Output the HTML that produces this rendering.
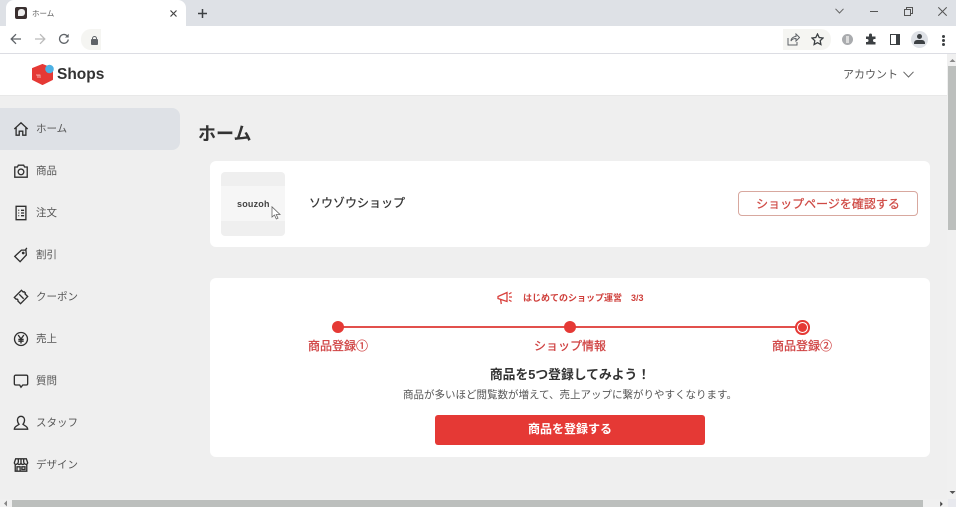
<!DOCTYPE html>
<html lang="ja">
<head>
<meta charset="utf-8">
<title>ホーム</title>
<style>
html,body{margin:0;padding:0;width:956px;height:507px;overflow:hidden;background:#efefef;font-family:"Liberation Sans","Noto Sans CJK JP",sans-serif;color:#333}
div,span,svg{position:absolute;box-sizing:border-box}
.t{white-space:nowrap;line-height:1}
.m{-webkit-text-stroke:.25px currentColor}
.nav{left:36px;font-size:10.500px;color:#555;letter-spacing:0}
.ic{left:12.500px;width:16px;height:16px;fill:none;stroke:#2f2f2f;stroke-width:1.500}
.step{font-size:12px;color:#cf4040;text-align:center;width:120px}
.dot{width:12px;height:12px;border-radius:50%;background:#e53935;top:321px}
</style>
</head>
<body>
<!-- browser tab strip -->
<div style="left:0;top:0;width:956px;height:26px;background:#dee1e6"></div>
<div style="left:6px;top:0;width:180px;height:26px;background:#fff;border-radius:8px 8px 0 0"></div>
<div style="left:15px;top:7px;width:12px;height:12px;background:#3a3030;border-radius:2px"></div>
<div style="left:18px;top:9px;width:7px;height:7px;background:#eee;border-radius:3px 3px 3px 0"></div>
<div class="t" style="left:32px;top:10px;font-size:7.500px;color:#555">ホーム</div>
<svg style="left:170px;top:10px;width:7px;height:7px" viewBox="0 0 7 7"><path d="M.5 .5l6 6M6.500 .5l-6 6" stroke="#444" stroke-width="1.200" fill="none"/></svg>
<svg style="left:198px;top:9px;width:9px;height:9px" viewBox="0 0 9 9"><path d="M4.500 0v9M0 4.500h9" stroke="#3c4043" stroke-width="1.500" fill="none"/></svg>
<svg style="left:835px;top:8px;width:9px;height:6px" viewBox="0 0 9 6"><path d="M.5 .8L4.500 5 8.500 .8" stroke="#666" fill="none"/></svg>
<div style="left:870px;top:11px;width:8px;height:1px;background:#555"></div>
<svg style="left:904px;top:7px;width:9px;height:9px" viewBox="0 0 9 9"><path d="M.5 2.500h6v6h-6zM2.500 2.500v-2h6v6h-2" stroke="#555" fill="none"/></svg>
<svg style="left:938px;top:7px;width:9px;height:9px" viewBox="0 0 9 9"><path d="M.3 .3l8.400 8.400M8.700 .3L.3 8.700" stroke="#555" fill="none"/></svg>

<!-- toolbar -->
<div style="left:0;top:26px;width:956px;height:28px;background:#fff;border-bottom:1px solid #dcdde3"></div>
<svg style="left:10px;top:33px;width:12px;height:12px" viewBox="0 0 12 12"><path d="M11 6H1.500M6 1.200L1.200 6 6 10.800" stroke="#5f6368" stroke-width="1.300" fill="none"/></svg>
<svg style="left:34px;top:33px;width:12px;height:12px" viewBox="0 0 12 12"><path d="M1 6h9.500M6 1.200L10.800 6 6 10.800" stroke="#bbb" stroke-width="1.300" fill="none"/></svg>
<svg style="left:58px;top:33px;width:12px;height:12px" viewBox="0 0 12 12"><path d="M10.300 6.500A4.400 4.400 0 1 1 9 2.700" stroke="#5f6368" stroke-width="1.300" fill="none"/><path d="M10.700 .8v3.700H7z" fill="#5f6368"/></svg>
<div style="left:81px;top:29px;width:20px;height:21px;background:#f5f5f2;border-radius:10px 0 0 10px"></div>
<div style="left:91px;top:39px;width:7px;height:6px;background:#5f6368;border-radius:1px"></div>
<div style="left:92px;top:36px;width:5px;height:5px;border:1px solid #5f6368;border-radius:3px 3px 0 0"></div>
<div style="left:783px;top:29px;width:48px;height:21px;background:#f5f5f2;border-radius:0 10px 10px 0"></div>
<svg style="left:787px;top:33px;width:13px;height:13px" viewBox="0 0 13 13"><path d="M1 5v7h9V9M4 8c0-3 3-4.500 5-4.500V1l3.500 3.500L9 8V5.500C7 5.500 5 6 4 8z" stroke="#5f6368" fill="none"/></svg>
<svg style="left:811px;top:33px;width:13px;height:13px" viewBox="0 0 13 13"><path d="M6.500 1l1.700 3.500 3.800.5-2.800 2.700.7 3.800-3.400-1.800-3.400 1.800.7-3.800L1 5l3.800-.5z" stroke="#3c4043" stroke-width="1.300" fill="none"/></svg>
<div style="left:842px;top:34px;width:11px;height:11px;border-radius:50%;background:#a9abae"></div>
<div style="left:846px;top:36px;width:3px;height:7px;background:#dcdcdc"></div>
<svg style="left:865px;top:33px;width:12px;height:12px" viewBox="0 0 12 12"><path d="M1 3.500h3V2a1.500 1.500 0 0 1 3 0v1.500h3.500V6H9.500a1.500 1.500 0 0 0 0 3h1v2.500H1V9h1a1.500 1.500 0 0 0 0-3H1z" fill="#3c4043"/></svg>
<div style="left:890px;top:34px;width:10px;height:11px;border:1.500px solid #3c4043;border-right-width:4px"></div>
<div style="left:911px;top:31px;width:17px;height:17px;border-radius:50%;background:#dee1e6"></div>
<div style="left:917px;top:34px;width:5px;height:5px;border-radius:50%;background:#3c4043"></div>
<div style="left:914px;top:40px;width:11px;height:4px;border-radius:3px 3px 0 0;background:#3c4043"></div>
<div style="left:942px;top:35px;width:3px;height:3px;border-radius:50%;background:#3c4043"></div>
<div style="left:942px;top:39px;width:3px;height:3px;border-radius:50%;background:#3c4043"></div>
<div style="left:942px;top:43px;width:3px;height:3px;border-radius:50%;background:#3c4043"></div>

<!-- app header -->
<div style="left:0;top:54px;width:947px;height:42px;background:#fff;border-bottom:1px solid #e8e8e8"></div>
<svg style="left:32px;top:63px;width:23px;height:23px" viewBox="0 0 23 23"><path d="M10.500 1.500L20.500 5.500V16.500L10.500 21.500 .5 16.500V5.500z" fill="#e53935" stroke="#e53935" stroke-linejoin="round"/><circle cx="17.500" cy="6" r="4.300" fill="#4db1e4"/><path d="M4 12h4v3M6 12v3" stroke="#f7c6c4" stroke-width=".8" fill="none"/></svg>
<div class="t" style="left:57px;top:66.500px;font-size:15.500px;font-weight:700;color:#333">Shops</div>
<div class="t" style="left:843px;top:69.500px;font-size:11px;color:#555">アカウント</div>
<svg style="left:903px;top:71px;width:11px;height:7px" viewBox="0 0 11 7"><path d="M.5 .8L5.500 6 10.500 .8" stroke="#666" fill="none"/></svg>

<!-- sidebar -->
<div style="left:0;top:108px;width:180px;height:42px;background:#dee1e6;border-radius:0 8px 8px 0"></div>
<svg class="ic" style="top:121px" viewBox="0 0 18 18"><path d="M1.500 9L9 2l7.500 7M3.500 7.500V16h3.500v-4.500h4V16h3.500V7.500"/></svg>
<div class="t nav" style="top:124px">ホーム</div>
<svg class="ic" style="top:163px" viewBox="0 0 18 18"><path d="M2 4.500h3l1-2h6l1 2h3v11.500h-14z"/><circle cx="9" cy="10" r="3.200"/></svg>
<div class="t nav" style="top:166px">商品</div>
<svg class="ic" style="top:205px" viewBox="0 0 18 18"><path d="M3.500 1.500h11v15h-11zM6 6h1M9 6h3.500M6 9h1M9 9h3.500M6 12h1M9 12h3.500"/></svg>
<div class="t nav" style="top:208px">注文</div>
<svg class="ic" style="top:247px" viewBox="0 0 18 18"><path d="M2 10.500L9.500 3.500h5l.5 5.500L8 16.500z"/><circle cx="11.500" cy="6.800" r=".8"/><path d="M14 3.500L15.500 1"/></svg>
<div class="t nav" style="top:250px">割引</div>
<svg class="ic" style="top:289px" viewBox="0 0 18 18"><path d="M1.500 9.500L9.500 1.500l2 2 1-.5 1.500 1.500-.5 1 3 3-8 8-3-3a1.500 1.500 0 0 0-2-2zM7 6l5 5"/></svg>
<div class="t nav" style="top:292px">クーポン</div>
<svg class="ic" style="top:331px" viewBox="0 0 18 18"><circle cx="9" cy="9" r="7.300"/><path d="M5.800 4.500L9 9l3.200-4.500M9 9v5M6 9.500h6M6 11.500h6"/></svg>
<div class="t nav" style="top:334px">売上</div>
<svg class="ic" style="top:373px" viewBox="0 0 18 18"><path d="M3 2.500h12a1.500 1.500 0 0 1 1.500 1.500v8a1.500 1.500 0 0 1-1.500 1.500h-4l-2 2.500-1.500-2.500H3A1.500 1.500 0 0 1 1.500 12V4A1.500 1.500 0 0 1 3 2.500z"/></svg>
<div class="t nav" style="top:376px">質問</div>
<svg class="ic" style="top:415px" viewBox="0 0 18 18"><path d="M6.800 10.500C5.500 9 5 7.500 5 5.500a4 4 0 0 1 8 0c0 2-.5 3.500-1.800 5 1.500 1.500 5.300 2 5.300 5.500H1.500c0-3.500 3.800-4 5.300-5.500z"/></svg>
<div class="t nav" style="top:418px">スタッフ</div>
<svg class="ic" style="top:457px" viewBox="0 0 18 18"><path d="M3 2h12l1.500 4.500a1.800 1.800 0 0 1-3.700 0 1.900 1.900 0 0 1-3.800 0 1.900 1.900 0 0 1-3.800 0 1.800 1.800 0 0 1-3.700 0zM2.500 8.500V16h13V8.500M4.500 16v-5h3.500v5M10 11h3.500v3H10zM6 2v4.500M9 2v4.500M12 2v4.500"/></svg>
<div class="t nav" style="top:460px">デザイン</div>

<!-- main -->
<div class="t" style="left:198px;top:125px;font-size:18px;font-weight:700;color:#333">ホーム</div>

<div style="left:210px;top:161px;width:720px;height:86px;background:#fff;border-radius:6px"></div>
<div style="left:221px;top:172px;width:64px;height:64px;background:#efefef;border-radius:4px"></div>
<div style="left:221px;top:186px;width:64px;height:35px;background:#f6f6f6"></div>
<div class="t" style="left:237px;top:200px;font-size:9px;font-weight:700;color:#444;letter-spacing:.2px">souzoh</div>
<svg style="left:271px;top:206px;width:11px;height:14px" viewBox="0 0 11 14"><path d="M1 .8V11l2.500-2 1.800 4 1.700-.8L5.200 8.500H9z" fill="#fff" stroke="#666" stroke-width=".8"/></svg>
<div class="t m" style="left:309px;top:197px;font-size:12px;color:#333">ソウゾウショップ</div>
<div style="left:738px;top:191px;width:180px;height:25px;background:#fff;border:1px solid #d8a89f;border-radius:4px"></div>
<div class="t m" style="left:738px;top:198px;width:180px;text-align:center;font-size:12px;color:#cf4a45">ショップページを確認する</div>

<div style="left:210px;top:278px;width:720px;height:179px;background:#fff;border-radius:6px"></div>
<svg style="left:497px;top:291px;width:16px;height:14px" viewBox="0 0 16 14"><path d="M1 5.500L10 1.500v9L1 7.500zM3.500 8l.8 5M12 3l2.500-1.500M12 6h3M12 9l2.500 1.500" stroke="#d9403c" stroke-width="1.300" fill="none"/></svg>
<div class="t" style="left:523px;top:294px;font-size:9px;font-weight:700;color:#cf3f3b">はじめてのショップ運営</div>
<div class="t" style="left:631px;top:294px;font-size:9px;font-weight:700;color:#cf3f3b">3/3</div>

<div style="left:338px;top:326px;width:464px;height:2px;background:#e2504c"></div>
<div class="dot" style="left:332px"></div>
<div class="dot" style="left:564px"></div>
<div style="left:795px;top:320px;width:14.500px;height:14.500px;border-radius:50%;background:#fff;border:2px solid #e53935"></div>
<div style="left:797.500px;top:322.500px;width:9.500px;height:9.500px;border-radius:50%;background:#e53935"></div>
<div class="t step m" style="left:278px;top:340px">商品登録①</div>
<div class="t step m" style="left:510px;top:340px">ショップ情報</div>
<div class="t step m" style="left:742px;top:340px">商品登録②</div>

<div class="t" style="left:210px;top:369px;width:720px;text-align:center;font-size:12.800px;font-weight:700;color:#333">商品を5つ登録してみよう！</div>
<div class="t" style="left:210px;top:390px;width:720px;text-align:center;font-size:10.500px;color:#555">商品が多いほど閲覧数が増えて、売上アップに繋がりやすくなります。</div>
<div style="left:435px;top:415px;width:270px;height:30px;background:#e53935;border-radius:3px"></div>
<div class="t" style="left:435px;top:423px;width:270px;text-align:center;font-size:12px;font-weight:700;color:#fff">商品を登録する</div>

<!-- scrollbars -->
<div style="left:947px;top:54px;width:9px;height:453px;background:#f0f0f0"></div>
<div style="left:948px;top:66px;width:8px;height:164px;background:#bcbfbd"></div>
<svg style="left:949px;top:58px;width:7px;height:5px" viewBox="0 0 7 5"><path d="M3.500 1L6.500 4H.5z" fill="#888"/></svg>
<svg style="left:949px;top:490px;width:7px;height:5px" viewBox="0 0 7 5"><path d="M3.500 4L6.500 1H.5z" fill="#555"/></svg>
<div style="left:0;top:499px;width:947px;height:8px;background:#f0f0f0"></div>
<div style="left:12px;top:500px;width:911px;height:7px;background:#bcbfbd"></div>
<svg style="left:3px;top:500px;width:5px;height:7px" viewBox="0 0 5 7"><path d="M1 3.500L4 .5v6z" fill="#888"/></svg>
<svg style="left:939px;top:501px;width:5px;height:6px" viewBox="0 0 5 7"><path d="M4 3.500L1 .5v6z" fill="#444"/></svg>
<div style="left:948px;top:499px;width:8px;height:8px;background:#e8e9ee"></div>
</body>
</html>
